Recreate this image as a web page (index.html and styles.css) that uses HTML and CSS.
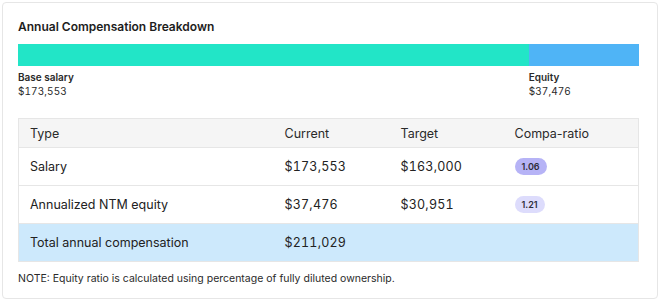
FILE: index.html
```html
<!DOCTYPE html>
<html>
<head>
<meta charset="utf-8">
<link rel="stylesheet" href="styles.css">
</head>
<body>
<div class="card">
  <h2 class="title">Annual Compensation Breakdown</h2>
  <div class="bar">
    <div class="seg seg-base" style="width:82.24%"></div>
    <div class="seg seg-equity" style="width:17.76%"></div>
  </div>
  <div class="legend">
    <div class="legend-item" style="width:82.24%">
      <div class="legend-label">Base salary</div>
      <div class="legend-value">$173,553</div>
    </div>
    <div class="legend-item">
      <div class="legend-label">Equity</div>
      <div class="legend-value">$37,476</div>
    </div>
  </div>
  <table class="comp-table">
    <colgroup>
      <col class="c1"><col class="c2"><col class="c3"><col class="c4">
    </colgroup>
    <thead>
      <tr><th>Type</th><th>Current</th><th>Target</th><th>Compa-ratio</th></tr>
    </thead>
    <tbody>
      <tr><td>Salary</td><td class="num">$173,553</td><td class="num">$163,000</td><td><span class="badge badge-strong">1.06</span></td></tr>
      <tr><td>Annualized NTM equity</td><td class="num">$37,476</td><td class="num">$30,951</td><td><span class="badge badge-light">1.21</span></td></tr>
      <tr class="total"><td>Total annual compensation</td><td class="num">$211,029</td><td></td><td></td></tr>
    </tbody>
  </table>
  <p class="note">NOTE: Equity ratio is calculated using percentage of fully diluted ownership.</p>
</div>
</body>
</html>
```

FILE: styles.css
```css
html, body {
  margin: 0;
  padding: 0;
  background: #ffffff;
}
body {
  padding: 2px 1px 2px 2px;
  font-family: Inter, "Liberation Sans", sans-serif;
  color: #222;
}
.card {
  border: 1px solid #e6e6e6;
  border-radius: 4px;
  padding: 16px 18px 0 15px;
  height: 297px;
  box-sizing: border-box;
}
.title {
  margin: 0;
  font-size: 12px;
  line-height: 16px;
  font-weight: 600;
  color: #1d1d1d;
}
.bar {
  display: flex;
  margin-top: 9px;
  height: 22px;
}
.seg { height: 100%; }
.seg-base { background: #22e5c7; }
.seg-equity { background: #4fb4f6; }
.legend {
  display: flex;
  margin-top: 4px;
}
.legend-item {
  font-size: 10px;
  line-height: 14px;
  color: #2a2a2a;
}
.legend-label { font-weight: 600; }
.legend-value { font-variant-numeric: tabular-nums; letter-spacing: 0.1px; }
.comp-table {
  margin-top: 20px;
  width: 100%;
  border-collapse: collapse;
  table-layout: fixed;
  font-size: 12.5px;
  border: 1px solid #e6e6e6;
}
.c1 { width: 255px; }
.c2 { width: 116px; }
.c3 { width: 114px; }
.c4 { width: auto; }
.comp-table th {
  text-align: left;
  font-weight: 400;
  background: #f5f5f5;
  height: 28px;
  padding: 0 11px;
  color: #2a2a2a;
}
.comp-table td {
  height: 37px;
  padding: 0 11px;
  border-top: 1px solid #e6e6e6;
  color: #222;
}
.comp-table td.num {
  font-variant-numeric: tabular-nums;
  letter-spacing: 0.2px;
}
.comp-table tr.total td {
  background: #cde9fc;
}
.badge {
  display: inline-block;
  font-size: 9px;
  font-weight: 600;
  line-height: 17px;
  padding: 0 7px;
  border-radius: 9px;
  color: #2e2e3a;
}
.badge-strong { background: #b6b3f6; }
.badge-light { background: #dddcfc; }
.note {
  margin: 10px 0 0;
  font-size: 10.5px;
  line-height: 14px;
  color: #2a2a2a;
}
```
